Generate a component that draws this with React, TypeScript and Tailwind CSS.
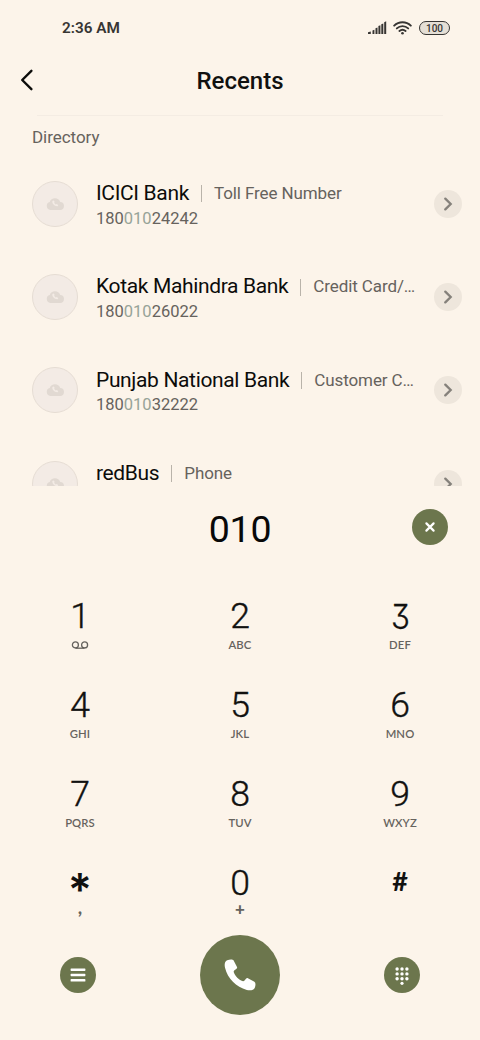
import { ReactNode } from 'react';

interface Contact {
    name: string;
    label: string;
    before: string;
    match: string;
    after: string;
}

interface DialKey {
    digit: string;
    sub?: ReactNode;
    digitClass?: string;
    subClass?: string;
}

const contacts: Contact[] = [
    { name: 'ICICI Bank', label: 'Toll Free Number', before: '180', match: '010', after: '24242' },
    { name: 'Kotak Mahindra Bank', label: 'Credit Card/…', before: '180', match: '010', after: '26022' },
    { name: 'Punjab National Bank', label: 'Customer C…', before: '180', match: '010', after: '32222' },
    { name: 'redBus', label: 'Phone', before: '', match: '', after: '' },
];

const VoicemailIcon = () => (
    <svg width="18" height="10" viewBox="0 0 18 10" fill="none" stroke="#66635e" strokeWidth="1.3">
        <circle cx="4.4" cy="4.9" r="3" />
        <circle cx="13.6" cy="4.9" r="3" />
        <path d="M4.4 8.2H13.6" />
    </svg>
);

const keys: DialKey[] = [
    { digit: '1', sub: <VoicemailIcon /> },
    { digit: '2', sub: 'ABC' },
    { digit: '3', sub: 'DEF', digitClass: "font-['Inter'] text-[34.5px] font-light [font-feature-settings:'cv09'] scale-x-[0.9] [-webkit-text-stroke:0.3px]" },
    { digit: '4', sub: 'GHI' },
    { digit: '5', sub: 'JKL' },
    { digit: '6', sub: 'MNO' },
    { digit: '7', sub: 'PQRS' },
    { digit: '8', sub: 'TUV' },
    { digit: '9', sub: 'WXYZ' },
    { digit: '*', sub: ',', digitClass: "font-['Inter'] text-[45px] font-semibold relative top-[6px]", subClass: 'text-[19px] font-bold relative -top-[5px]' },
    { digit: '0', sub: '+', subClass: 'text-[17px] font-black relative -top-[3px]' },
    { digit: '#', digitClass: "font-['Lato'] text-[27px] font-bold relative -top-[3px]" },
];

const SignalIcon = () => (
    <svg width="19" height="14" viewBox="0 0 19 14" fill="#373533">
        <path d="M0 13V11.2L2.8 10.5V13Z" />
        <path d="M4.5 13V9.4L6.4 8.8V13Z" />
        <path d="M7.5 13V7.3L9.5 6.5V13Z" />
        <path d="M10.4 13V5.1L12.4 4.2V13Z" />
        <path d="M13.3 13V3.2L15.3 2.5V13Z" />
        <path d="M16.2 13V1.2L18.2 .2V13Z" />
    </svg>
);

const WifiIcon = () => (
    <svg width="19" height="14" viewBox="0 0 19 14" fill="none" stroke="#373533" strokeWidth="1.9" strokeLinecap="round">
        <path d="M1.2 4.7C5.8.1 13.2.1 17.8 4.7" />
        <path d="M3.8 7.4C7 4.4 12 4.4 15.2 7.4" />
        <path d="M6.4 10C8.2 8.5 10.8 8.5 12.6 10" />
        <circle cx="9.5" cy="12.2" r="1.3" fill="#373533" stroke="none" />
    </svg>
);

const CloudIcon = () => (
    <svg width="18" height="14" viewBox="0 0 18 14">
        <path d="M4.4 13A4.1 4.1 0 0 1 3.7 5 5.6 5.6 0 0 1 14.2 5 4 4 0 0 1 13.7 13Z" fill="#e1d9d2" />
        <path d="M6.4 4.1C5.8 6.9 8.9 9.6 11.7 9.2L12.3 8.1 10.6 6.9 9.7 7.4C8.9 7 8.3 6.3 8.1 5.6L8.7 4.9 7.7 3.4Z" fill="#f3ebe5" />
    </svg>
);

const StatusBar = () => (
    <div className="flex h-14 shrink-0 items-center justify-between pr-[30px] pl-[62px] text-[#373533]">
        <span className="text-[15.3px] font-semibold">2:36 AM</span>
        <div className="flex items-center">
            <SignalIcon />
            <span className="w-[6px]" />
            <WifiIcon />
            <span className="ml-[7px] flex h-[14px] w-[31px] items-center justify-center rounded-full border-[1.5px] border-[#373533] bg-[#e5dfd6] text-[10px] font-medium">
                100
            </span>
        </div>
    </div>
);

const ContactRow = ({ contact }: { contact: Contact }) => (
    <div className="flex h-[93.4px] shrink-0 items-center pr-[18px] pl-8">
        <div className="flex size-[46px] shrink-0 items-center justify-center rounded-full border border-[#e6ddd4] bg-[#f3ebe5]">
            <CloudIcon />
        </div>
        <div className="mt-[5px] ml-[18px] w-[321px] shrink-0">
            <div className="flex h-[26px] items-center whitespace-nowrap">
                <span className="shrink-0 text-[21px] tracking-[-0.35px] text-[#0c0c0b]">{contact.name}</span>
                <span className="mr-3 ml-3 h-[17px] w-px shrink-0 bg-[#b9b3aa]" />
                <span className="text-[17px] tracking-[-0.1px] text-[#66625d]">{contact.label}</span>
            </div>
            <div className="h-[25px] text-[16.5px] leading-[24px] text-[#66625d]">
                {contact.before}
                <span className="text-[#97a398]">{contact.match}</span>
                {contact.after}
            </div>
        </div>
        <div className="ml-auto flex size-7 shrink-0 items-center justify-center rounded-full bg-[#eee6dc]">
            <svg width="10" height="14" viewBox="0 0 10 14" fill="none" stroke="#85817b" strokeWidth="2.3" strokeLinecap="round">
                <path d="M2.3 1.6L7.7 7 2.3 12.4" />
            </svg>
        </div>
    </div>
);

const KeyButton = ({ item }: { item: DialKey }) => (
    <button className="flex h-[88.9px] flex-col items-center">
        <span className={`flex h-[38px] items-center leading-none text-[#111110] ${item.digitClass ?? 'text-[35.5px] font-light [-webkit-text-stroke:0.4px]'}`}>
            {item.digit}
        </span>
        <span className={`flex h-[18px] items-center font-['Lato'] leading-none tracking-[0.1px] text-[#66635e] ${item.subClass ?? 'text-[11.3px] font-semibold'}`}>
            {item.sub}
        </span>
    </button>
);

const App = () => {
    return (
        <div className="flex h-[1040px] w-[480px] flex-col overflow-hidden bg-[#fcf4ea] font-['Roboto',sans-serif]">
            <StatusBar />

            <header className="grid h-[59px] shrink-0 grid-cols-[80px_1fr_80px] items-center">
                <button className="-mt-[11px] pl-[19px]">
                    <svg width="15" height="22" viewBox="0 0 15 22" fill="none" stroke="#0c0c0b" strokeWidth="2.4" strokeLinecap="round" strokeLinejoin="round">
                        <path d="M12.4 1.8L3.2 11 12.4 20.2" />
                    </svg>
                </button>
                <h1 className="-mt-[9px] text-center text-[24px] font-medium text-[#111110]">Recents</h1>
            </header>
            <div className="mx-[37px] h-px shrink-0 bg-[#f4ece3]" />

            <section className="flex h-[370px] shrink-0 flex-col overflow-hidden">
                <h2 className="h-[41px] shrink-0 pl-8 text-[17px] leading-[42px] tracking-[-0.05px] text-[#66625d]">Directory</h2>
                {contacts.map((c) => (
                    <ContactRow key={c.name} contact={c} />
                ))}
            </section>

            <section className="grid h-[112px] shrink-0 grid-cols-[100px_1fr_100px]">
                <div className="col-start-2 h-[84px] text-center text-[37.5px] leading-[86px] tracking-[-0.2px] text-[#080808]">010</div>
                <button className="mt-[23px] ml-[31.5px] flex size-9 items-center justify-center rounded-full bg-[#6c764d]">
                    <svg width="12" height="12" viewBox="0 0 12 12" stroke="#fff" strokeWidth="2.2" strokeLinecap="round">
                        <path d="M2.4 2.4L9.6 9.6M9.6 2.4L2.4 9.6" />
                    </svg>
                </button>
            </section>

            <section className="grid h-[337px] shrink-0 grid-cols-3 content-start">
                {keys.map((k) => (
                    <KeyButton key={k.digit} item={k} />
                ))}
            </section>

            <footer className="flex h-20 shrink-0 items-center justify-between px-[60px]">
                <button className="flex size-9 items-center justify-center rounded-full bg-[#6c764d]">
                    <svg width="16" height="14" viewBox="0 0 16 14" fill="#fff">
                        <rect x=".6" y=".5" width="14.8" height="2.4" rx=".6" />
                        <rect x=".6" y="5.8" width="14.8" height="2.4" rx=".6" />
                        <rect x=".6" y="11.1" width="14.8" height="2.4" rx=".6" />
                    </svg>
                </button>
                <button className="flex size-20 items-center justify-center rounded-full bg-[#6c764d]">
                    <svg width="32" height="32" viewBox="0 0 32 32" fill="#fff">
                        <path d="M3.2 1.3C5.5.3 8.7.2 9.5 1.3L13 8.1C13.3 8.8 13.1 9.4 12.5 9.8L10.2 11.5C9.6 12 9.6 12.7 9.9 13.5 11.3 17.3 14.7 20.8 18.5 22.1 19.2 22.4 19.8 22.3 20.3 21.8L22.2 19.6C22.7 19 23.2 18.8 23.9 19.2L30.4 22.7C31.7 23.4 31.8 26.6 30.8 28.7 29.7 31.3 26.2 31.7 22.8 30.9 12.3 28.3 3.5 19.6 1.1 9.1.3 5.6.6 2.5 3.2 1.3Z" />
                    </svg>
                </button>
                <button className="flex size-9 items-center justify-center rounded-full bg-[#6c764d]">
                    <svg width="14" height="18" viewBox="0 0 14 18" fill="#fff" className="mt-[2px]">
                        {[2, 6.9, 11.8].map((y) => [2.1, 7, 11.9].map((x) => <circle key={`${x}-${y}`} cx={x} cy={y} r="1.7" />))}
                        <circle cx="7" cy="16.3" r="1.6" />
                    </svg>
                </button>
            </footer>
        </div>
    );
};

export default App;
